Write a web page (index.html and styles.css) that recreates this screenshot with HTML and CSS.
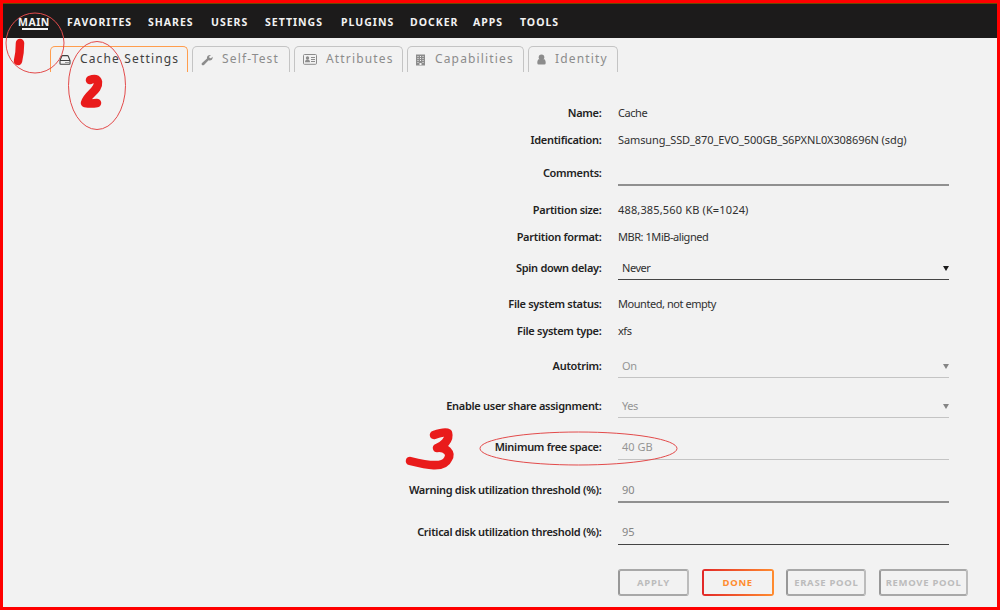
FILE: index.html
```html
<!DOCTYPE html>
<html lang="en">
    <head>
        <meta charset="UTF-8" />
        <meta name="viewport" content="width=device-width, initial-scale=1.0" />
        <title>Cache Settings</title>
        <link rel="stylesheet" href="styles.css">
    </head>
    <body>
        <div class="page">
            <nav class="menu">
                <a class="active">MAIN</a>
                <a>FAVORITES</a>
                <a>SHARES</a>
                <a>USERS</a>
                <a>SETTINGS</a>
                <a>PLUGINS</a>
                <a>DOCKER</a>
                <a>APPS</a>
                <a>TOOLS</a>
            </nav>

            <div class="tabs">
                <div class="tab active">
                    <svg width="12" height="10" viewBox="0 0 12 10"><path d="M1 5.5 2.7 1.2Q3 .6 3.600 .6H8.400Q9 .6 9.300 1.200L11 5.500V8.500Q11 9.300 10.200 9.300H1.800Q1 9.300 1 8.500ZM1 5.500H11" fill="none" stroke="currentColor" stroke-width="1.100" /><path d="M6.500 7h1v1h-1zM8.500 7h1v1h-1z" /></svg>
                    <span>Cache Settings</span>
                </div>
                <div class="tab">
                    <svg width="12" height="12" viewBox="0 0 12 12"><path d="M1 9 6 4.500C5.600 2 7.500.5 10 1L8.200 2.600 8.500 4 10 4.200 11.600 2.700C12 5.500 10 7 7.600 6.300L3 11C1.500 12-.2 10.500 1 9Z" /></svg>
                    <span>Self-Test</span>
                </div>
                <div class="tab">
                    <svg width="14" height="11" viewBox="0 0 14 11"><rect x=".5" y=".5" width="13" height="9.800" rx="1" fill="none" stroke="currentColor" /><path d="M2 8.200Q2 5.500 4.500 5.500T7 8.200ZM8 3h4v1H8zM8 5h4v1H8zM8 7h4v1H8z" /><circle cx="4.500" cy="4" r="1.700" /></svg>
                    <span>Attributes</span>
                </div>
                <div class="tab">
                    <svg width="10" height="12" viewBox="0.5 0 10 12"><path fill-rule="evenodd" d="M.5.5h9v11h-9ZM2 2v1h1V2ZM4.500 2v1h1V2ZM7 2v1h1V2ZM2 4v1h1V4ZM4.500 4v1h1V4ZM7 4v1h1V4ZM2 6v1h1V6ZM4.500 6v1h1V6ZM7 6v1h1V6ZM2 8v1h1V8ZM7 8v1h1V8ZM4 9v2h2V9Z" /></svg>
                    <span>Capabilities</span>
                </div>
                <div class="tab">
                    <svg width="9" height="11" viewBox="0 0 9 11"><path d="M2 5C.5 5.500 .3 7.500.3 9q0 1.500 1.400 1.500h5.600Q8.700 10.500 8.700 9C8.700 7.500 8.500 5.500 7 5Q4.500 6.500 2 5Z" /><circle cx="4.500" cy="3.200" r="2.800" /></svg>
                    <span>Identity</span>
                </div>
            </div>

            <div class="form">
                <div class="row"><label>Name:</label><span>Cache</span></div>
                <div class="row"><label>Identification:</label><span class="ident">Samsung_SSD_870_EVO_500GB_S6PXNL0X308696N (sdg)</span></div>
                <div class="row input comments"><label>Comments:</label><div class="field thick"></div></div>
                <div class="row"><label>Partition size:</label><span class="size">488,385,560 KB (K=1024)</span></div>
                <div class="row"><label>Partition format:</label><span>MBR: 1MiB-aligned</span></div>
                <div class="row select"><label>Spin down delay:</label><div class="field">Never<i class="arrow"></i></div></div>
                <div class="row"><label>File system status:</label><span>Mounted, not empty</span></div>
                <div class="row"><label>File system type:</label><span>xfs</span></div>
                <div class="row select spaced"><label>Autotrim:</label><div class="field disabled">On<i class="arrow"></i></div></div>
                <div class="row select"><label>Enable user share assignment:</label><div class="field disabled">Yes<i class="arrow"></i></div></div>
                <div class="row input"><label>Minimum free space:</label><div class="field disabled">40 GB</div></div>
                <div class="row input threshold"><label>Warning disk utilization threshold (%):</label><div class="field placeholder thick">90</div></div>
                <div class="row input"><label>Critical disk utilization threshold (%):</label><div class="field placeholder">95</div></div>
            </div>

            <div class="buttons">
                <button disabled>APPLY</button>
                <button class="done">DONE</button>
                <button disabled>ERASE POOL</button>
                <button disabled>REMOVE POOL</button>
            </div>

            <!-- step markers -->
            <svg class="marks" width="1000" height="610" viewBox="0 0 1000 610">
                <g class="ring">
                    <ellipse cx="35" cy="43" rx="29" ry="30" />
                    <ellipse cx="97" cy="85.500" rx="28.500" ry="44" />
                    <ellipse cx="578.500" cy="448.500" rx="98.500" ry="16.500" />
                </g>
                <g class="pen">
                    <path d="M20 43Q20 53 18 61" />
                    <path d="M90 80Q97 77 98 82C99 91 87 94 85 103Q91 104 97 103" />
                    <path d="M434 435Q445 431 448 433C450 440 443 446 437 448C446 447 452 453 448 459C444 469 426 465 410 461" />
                </g>
            </svg>
        </div>
    </body>
</html>
```
FILE: styles.css
```css
* {
    box-sizing: border-box;
}
body {
    margin: 0;
    font-family: "Noto Sans", sans-serif;
    font-size: 11px;
    color: #303030;
}
.page {
    position: relative;
    width: 1000px;
    height: 610px;
    background: #f2f2f2;
    border: 3px solid #ff0000;
    overflow: hidden;
}
.menu {
    display: grid;
    grid-template-columns: 49px 81px 63px 54px 76px 69px 63px 47px 60px;
    height: 35px;
    padding: 8px 0 0 15px;
    background: #1c1b1b;
    border-top: 1px solid #684b00;
    color: #f2f2f2;
    font-size: 10.5px;
    font-weight: 700;
    letter-spacing: 1px;
    line-height: 20px;
    white-space: nowrap;
}
.menu .active {
    letter-spacing: 0.5px;
}
.menu .active::after {
    content: "";
    display: block;
    width: 26px;
    height: 2px;
    margin: -4px 0 0 4px;
    background: #f2f2f2;
}
.tabs {
    display: grid;
    grid-template-columns: 138px 98px 109px 117px 90px;
    gap: 4px;
    margin: 8px 0 0 47px;
}
.tab {
    display: flex;
    align-items: center;
    height: 26px;
    padding-left: 8px;
    border: 1px solid #c4c4c4;
    border-bottom: 0;
    border-radius: 5px 5px 0 0;
    color: #8c8c8c;
    fill: #8c8c8c;
    font-size: 12px;
    letter-spacing: 1.15px;
    white-space: nowrap;
}
.tab svg {
    flex: none;
}
.tab span {
    margin: -2px 0 0 9px;
}
.tab.active {
    border-color: #ff9d4d;
    color: #404040;
    fill: #404040;
}
.form {
    display: flex;
    flex-direction: column;
    margin-top: 31px;
}
.row {
    display: grid;
    grid-template-columns: 598.5px 331px;
    column-gap: 16.5px;
    height: 27px;
    line-height: 20px;
    letter-spacing: -0.45px;
    white-space: nowrap;
}
.row label {
    text-align: right;
    font-weight: 600;
    letter-spacing: -0.3px;
    color: #222;
}
.row .ident {
    letter-spacing: -0.1px;
}
.row .size {
    letter-spacing: 0.15px;
}
.row.select,
.row.input {
    height: auto;
    margin: 4px 0 14px;
}
.row.input {
    margin-top: 5px;
}
.row.comments,
.row.threshold {
    margin-top: 6px;
}
.row.spaced {
    margin-top: 8px;
}
.field {
    display: flex;
    justify-content: space-between;
    align-items: flex-start;
    height: 22px;
    padding-left: 4px;
    border-bottom: 1px solid #444;
}
.input .field {
    height: 23px;
    letter-spacing: 0;
}
.field.thick {
    border-bottom: 2px solid #909090;
}
.field.disabled {
    color: #959595;
    border-color: #c4c4c4;
}
.field.placeholder {
    color: #858585;
}
.arrow {
    margin-top: 8px;
    border: solid transparent;
    border-width: 5px 3px 0;
    border-top-color: #1c1b1b;
}
.disabled .arrow {
    border-top-color: #858585;
}
.buttons {
    display: grid;
    grid-template-columns: 71px 72px 80px 89px;
    column-gap: 12.7px;
    margin: 10px 0 0 615px;
}
button {
    height: 27px;
    padding: 0;
    border: 2px solid;
    border-color: #a8a8a8 #bcbcbc #a8a8a8 #989898;
    border-radius: 3px;
    background: none;
    color: #bcbcbc;
    font: 700 9.5px "Noto Sans", sans-serif;
    letter-spacing: 0.7px;
    white-space: nowrap;
}
button.done {
    border: 0;
    color: #ff8c2f;
    background: linear-gradient(#f2f2f2, #f2f2f2) 2px 2px / calc(100% - 4px) calc(100% - 4px) no-repeat,
        linear-gradient(90deg, #e22828, #ff8c2f);
}
.marks {
    position: absolute;
    top: -3px;
    left: -3px;
}
.ring {
    fill: none;
    stroke: #e34b4b;
}
.pen {
    fill: none;
    stroke: #e91b1b;
    stroke-width: 8.5px;
    stroke-linecap: round;
    stroke-linejoin: round;
}
```
